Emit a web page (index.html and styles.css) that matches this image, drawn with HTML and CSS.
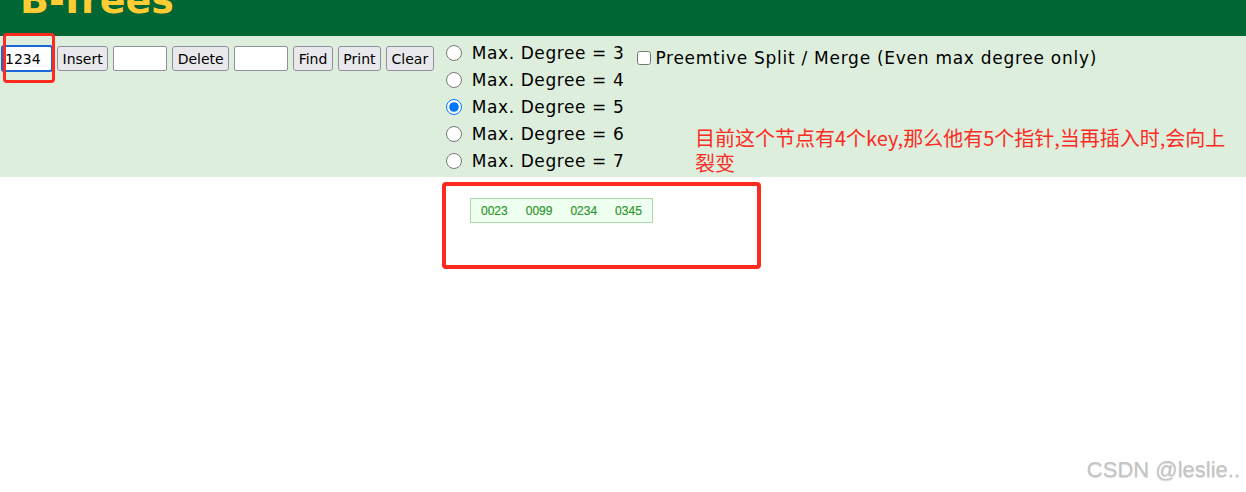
FILE: index.html
```html
<!DOCTYPE HTML>
<html lang="en">
  <head>
    <title>B-Trees</title>
    <meta charset="utf-8">
    <link rel="stylesheet" href="styles.css">
  </head>
  <body>

  <header class="topbar">
    <h1 class="title">B-Trees</h1>
  </header>

  <section class="controls">
    <div class="toolbar">
      <input class="field field-first focused" type="text" value="1234">
      <button class="btn">Insert</button>
      <input class="field" type="text">
      <button class="btn">Delete</button>
      <input class="field" type="text">
      <button class="btn">Find</button>
      <button class="btn">Print</button>
      <button class="btn">Clear</button>
    </div>

    <div class="degrees">
      <label class="degree"><input type="radio" name="deg">Max. Degree = 3</label>
      <label class="degree"><input type="radio" name="deg">Max. Degree = 4</label>
      <label class="degree"><input type="radio" name="deg" checked>Max. Degree = 5</label>
      <label class="degree"><input type="radio" name="deg">Max. Degree = 6</label>
      <label class="degree"><input type="radio" name="deg">Max. Degree = 7</label>
    </div>

    <label class="preempt"><input type="checkbox">Preemtive Split / Merge (Even max degree only)</label>
  </section>

  <main class="canvas">
    <div class="node">
      <span>0023</span>
      <span>0099</span>
      <span>0234</span>
      <span>0345</span>
    </div>
  </main>

  <!-- annotations drawn over the screenshot -->
  <div class="mark mark-input"></div>
  <div class="mark mark-node"></div>
  <div class="note">目前这个节点有4个key,那么他有5个指针,当再插入时,会向上<br>裂变</div>

  <div class="watermark">CSDN @leslie..</div>

  </body>
</html>
```

FILE: styles.css
```css
html {
  height: 100%;
}
body {
  margin: 0;
  padding: 0;
  background: #ffffff;
  color: #000000;
  font-family: "DejaVu Sans", Verdana, sans-serif;
  font-size: 17px;
  height: 100%;
  position: relative;
  overflow: hidden;
}

.topbar {
  height: 36px;
  background-color: #006633;
  overflow: hidden;
}

.title {
  margin: -19px 0 0 20px;
  font: bold 38px/38px "DejaVu Sans", Verdana, sans-serif;
  color: #ffcc33;
}

.controls {
  display: flex;
  align-items: flex-start;
  height: 141px;
  background-color: #ddeedd;
}

.toolbar {
  display: flex;
  align-items: center;
  gap: 5px;
  margin: 10px 0 0 2px;
  height: 25px;
}

.field {
  box-sizing: border-box;
  width: 54px;
  height: 25px;
  padding: 0 2px;
  border: 1px solid #8f8f9d;
  border-radius: 2px;
  background: #ffffff;
  font: 14px "DejaVu Sans", Verdana, sans-serif;
  color: #000;
}

.field-first {
  width: 50px;
}

.focused {
  outline: 2px solid #1a66d9;
  outline-offset: -1px;
}

.btn {
  box-sizing: border-box;
  height: 25px;
  padding: 0 4.5px;
  border: 1px solid #8f8f9d;
  border-radius: 3px;
  background: #e9e9ed;
  font: 14px "DejaVu Sans", Verdana, sans-serif;
  color: #000;
}

.degrees {
  display: flex;
  flex-direction: column;
  margin: 4px 0 0 12px;
  letter-spacing: 0.6px;
}

.degree {
  display: flex;
  align-items: center;
  height: 26.8px;
}

.degree input {
  width: 16px;
  height: 16px;
  margin: 0 10px 0 0;
}

.preempt {
  display: flex;
  align-items: center;
  height: 20px;
  margin: 12px 0 0 13px;
  letter-spacing: 0.73px;
}

.preempt input {
  width: 14px;
  height: 14px;
  margin: 0 4px 0 0;
}

.canvas {
  padding: 21px 0 0 470px;
}

.node {
  display: inline-flex;
  align-items: center;
  gap: 18px;
  box-sizing: border-box;
  height: 25px;
  padding: 0 10px 0 10px;
  border: 1px solid #a9dba9;
  background: #efffef;
  font: 12px "Liberation Sans", Arial, sans-serif;
  color: #2f962f;
  -webkit-text-stroke: 0.2px #2f962f;
}

.mark {
  position: absolute;
  box-sizing: border-box;
  border: 3px solid #ff2a1f;
  border-radius: 4px;
}

.mark-input {
  left: 3px;
  top: 33px;
  width: 52px;
  height: 50px;
}

.mark-node {
  left: 442px;
  top: 182px;
  width: 319px;
  height: 87px;
  border-width: 4px;
}

.note {
  position: absolute;
  left: 695px;
  top: 126px;
  white-space: nowrap;
  font: 20px/24.5px "Noto Sans CJK SC", sans-serif;
  color: #fb2c24;
}

.watermark {
  position: absolute;
  right: 6px;
  bottom: 9px;
  font: 22px "Liberation Sans", Arial, sans-serif;
  color: #c4c4c4;
  text-shadow: 0 1px 1px rgba(0,0,0,0.15);
}
```
